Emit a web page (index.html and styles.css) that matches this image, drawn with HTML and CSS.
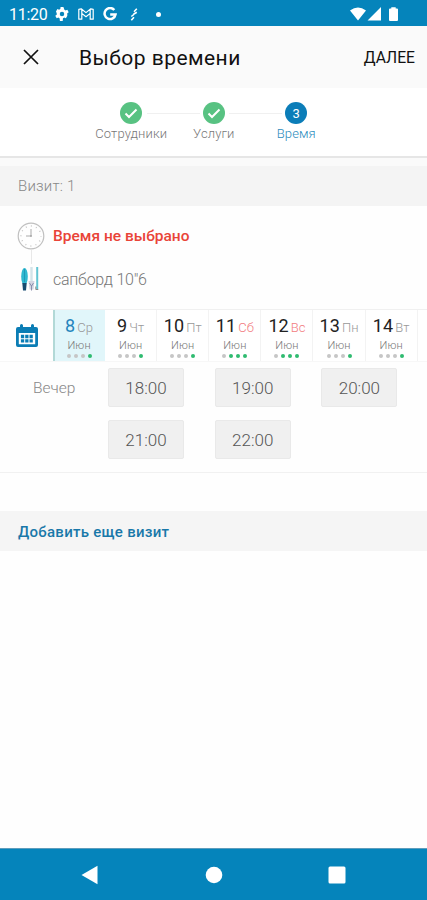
FILE: index.html
```html
<!DOCTYPE html>
<html lang="ru">
<head>
  <meta charset="UTF-8">
  <title>Выбор времени</title>
  <link rel="stylesheet" href="styles.css">
</head>
<body>
  <!-- Status bar -->
  <div class="status">
    <span class="clock">11:20</span>
    <svg class="gear" width="14" height="14" viewBox="2.900 2 20 20"><path fill="#fff" fill-rule="evenodd" d="M20.400 13a7.500 7.500 0 0 0 0-2l2.100-1.600-2-3.500-2.500 1a7.500 7.500 0 0 0-1.700-1L14.900 2h-4l-.4 2.900a7.500 7.500 0 0 0-1.700 1l-2.500-1-2 3.500L5.400 11a7.500 7.500 0 0 0 0 2l-2.100 1.600 2 3.500 2.500-1a7.500 7.500 0 0 0 1.700 1l.4 3.900h4l.4-3.900a7.500 7.500 0 0 0 1.700-1l2.500 1 2-3.500zM12.900 8.800a3.200 3.200 0 1 1 0 6.400 3.200 3.200 0 0 1 0-6.400z"/></svg>
    <svg class="mail" width="16" height="12" viewBox="0 0 16 12" fill="none" stroke="#fff" stroke-width="1.200" stroke-linejoin="round"><path d="M.8 11.200V1.400l2.400-.6L8 4.600 12.800.8l2.400.6v9.800h-3V5.400L8 8.700 3.800 5.400v5.800zM3.800 5.400V1.200M12.200 5.400V1.200"/></svg>
    <svg class="google" width="14" height="14" viewBox="0 0 14 14" fill="none" stroke="#fff" stroke-width="2.500"><path d="M11.300 3A5.500 5.500 0 1 0 12.500 7.500H7.200"/></svg>
    <svg class="bolt" width="8" height="13" viewBox="0 0 8 13" fill="none" stroke="#fff" stroke-width="1.600"><path d="M6.800.8 4 3.800M6.800 4.200 3.500 6.200M3.800 6.500 1.300 8.500M4 9.200 1.300 12.200"/></svg>
    <span class="dot"></span>
    <svg class="signal" width="50" height="16" viewBox="0 0 50 16" fill="#fff"><path d="M1 4.500Q9 -1.500 17 4.500L9 14.500zM32 1v13.500H18.500zM40 3.500q0-1 1-1h1.300V1.200h4.400v1.300H48q1 0 1 1v10.500q0 1-1 1h-7q-1 0-1-1z"/></svg>
  </div>

  <!-- Header -->
  <div class="header">
    <svg class="close" width="16" height="16" viewBox="0 0 16 16" stroke="#111" stroke-width="1.700"><path d="M1 1l14 14M15 1L1 15"/></svg>
    <h1>Выбор времени</h1>
    <span class="next">ДАЛЕЕ</span>
  </div>

  <!-- Steps -->
  <div class="steps">
    <div class="step">
      <span class="circle"><svg width="14" height="11" viewBox="0 0 14 11" fill="none" stroke="#fff" stroke-width="2"><path d="M1.500 5.500l3.500 3.500L12.500 1.500"/></svg></span>
      <span>Сотрудники</span>
    </div>
    <div class="step">
      <span class="circle"><svg width="14" height="11" viewBox="0 0 14 11" fill="none" stroke="#fff" stroke-width="2"><path d="M1.500 5.500l3.500 3.500L12.500 1.500"/></svg></span>
      <span>Услуги</span>
    </div>
    <div class="step current">
      <span class="circle">3</span>
      <span>Время</span>
    </div>
  </div>

  <div class="visit">Визит: 1</div>

  <!-- Visit info -->
  <div class="info">
    <div class="row">
      <svg width="28" height="28" viewBox="0 0 28 28" fill="none" stroke="#c0c0c0"><circle cx="14" cy="14" r="12.800" stroke-width="1.200"/><circle cx="14" cy="14" r="10" stroke-width="1.400" stroke-dasharray=".9 4.336" stroke-dashoffset=".45"/><path d="M14 7v7H9" stroke="#aaa"/><circle cx="14" cy="14" r="1" fill="#aaa" stroke="none"/></svg>
      <span class="warn">Время не выбрано</span>
    </div>
    <div class="link"></div>
    <div class="row">
      <svg width="28" height="26" viewBox="0 0 28 26"><ellipse cx="7.500" cy="10.500" rx="3.300" ry="8.500" fill="#2fb8d0"/><path d="M5.300 17h4.400L9 24.500H6z" fill="#164b70"/><path d="M7.500 3v13" stroke="#209ab8"/><path d="M14.500 1v16" stroke="#d3e3e8" stroke-width="2.400"/><path d="M11.500 15h6l-1 8.500h-4z" fill="#d4d6e2"/><path d="M12.500 17l2 3 2-3M14.500 19v5.500" fill="none" stroke="#8b8fad"/><path d="M20.200 1v22" stroke="#62c4d2" stroke-width="2"/><path d="M18.800 20.500v3h2.500" fill="none" stroke="#888"/></svg>
      <span>сапборд 10"6</span>
    </div>
  </div>

  <!-- Days -->
  <div class="days">
    <div class="calendar">
      <svg width="22" height="24" viewBox="0 0 22 24"><path fill="#0b7db5" fill-rule="evenodd" d="M2 3h2V1.500a1 1 0 0 1 3 0V3h8V1.500a1 1 0 0 1 3 0V3h2a2 2 0 0 1 2 2v16a2 2 0 0 1-2 2H2a2 2 0 0 1-2-2V5a2 2 0 0 1 2-2zm.8 6v11.200h16.400V9z"/><path stroke="#0b7db5" stroke-width="3.300" stroke-dasharray="3.300 1" d="M4.900 12.500h12M4.900 16.800h12"/></svg>
    </div>
    <div class="day active"><p><b>8</b> Ср</p><small>Июн</small><div class="dots"><i></i><i></i><i></i><i class="on"></i></div></div>
    <div class="day"><p><b>9</b> Чт</p><small>Июн</small><div class="dots"><i></i><i></i><i></i><i class="on"></i></div></div>
    <div class="day"><p><b>10</b> Пт</p><small>Июн</small><div class="dots"><i></i><i></i><i></i><i class="on"></i></div></div>
    <div class="day weekend"><p><b>11</b> Сб</p><small>Июн</small><div class="dots"><i></i><i class="on"></i><i class="on"></i><i class="on"></i></div></div>
    <div class="day weekend"><p><b>12</b> Вс</p><small>Июн</small><div class="dots"><i></i><i class="on"></i><i class="on"></i><i class="on"></i></div></div>
    <div class="day"><p><b>13</b> Пн</p><small>Июн</small><div class="dots"><i></i><i></i><i></i><i class="on"></i></div></div>
    <div class="day"><p><b>14</b> Вт</p><small>Июн</small><div class="dots"><i></i><i></i><i></i><i class="on"></i></div></div>
    <div class="rest"></div>
  </div>

  <!-- Time slots -->
  <div class="slots">
    <span class="part">Вечер</span>
    <div class="times">
      <button>18:00</button>
      <button>19:00</button>
      <button>20:00</button>
      <button>21:00</button>
      <button>22:00</button>
    </div>
  </div>

  <div class="add">Добавить еще визит</div>

  <!-- Android navigation -->
  <div class="nav">
    <svg width="18" height="20" viewBox="0 0 18 20"><path fill="#fff" d="M.5 10L16.500 .8v18.400z"/></svg>
    <svg width="18" height="18" viewBox="0 0 18 18"><circle cx="9" cy="9" r="8.300" fill="#fff"/></svg>
    <svg width="18" height="18" viewBox="0 0 18 18"><rect x=".5" y=".5" width="17" height="17" rx="1.500" fill="#fff"/></svg>
  </div>
</body>
</html>
```
FILE: styles.css
```css
* { margin: 0; padding: 0; box-sizing: border-box; }
body {
  font-family: Roboto, sans-serif;
  font-weight: 300;
  width: 427px;
  height: 900px;
  overflow: hidden;
  display: flex;
  flex-direction: column;
  background: #fefefe;
  color: #777;
}
svg { display: block; flex: none; }
.status {
  height: 26px;
  background: #0584bb;
  color: #fff;
  display: flex;
  align-items: center;
  padding: 2px 28px 0 9px;
}
.clock {
  width: 46px;
  font-size: 16px;
  font-weight: 400;
  letter-spacing: -0.3px;
}
.mail { margin-left: 9px; }
.google { margin-left: 9px; }
.bolt { margin-left: 13px; }
.dot {
  width: 5px;
  height: 5px;
  margin-left: 18px;
  border-radius: 50%;
  background: #fff;
}
.signal { margin-left: auto; }
.header {
  height: 62px;
  background: #fafafa;
  color: #111;
  display: flex;
  align-items: center;
  padding: 0 12px 0 23px;
}
.header h1 {
  margin-left: 40px;
  padding-top: 2px;
  font-size: 21px;
  font-weight: 400;
  letter-spacing: 0.45px;
}
.next {
  margin-left: auto;
  font-size: 15.700px;
  font-weight: 400;
}
.steps {
  height: 70px;
  padding: 14px 89px 0 90px;
  display: flex;
  background: #fff;
  border-bottom: 2px solid #e6e6e6;
  background-image: linear-gradient(#f0f0f0, #f0f0f0), linear-gradient(#f0f0f0, #f0f0f0);
  background-size: 53px 1px;
  background-position: 147px 25px, 229px 25px;
  background-repeat: no-repeat;
}
.step {
  width: 82.500px;
  flex: none;
  display: flex;
  flex-direction: column;
  align-items: center;
  gap: 2px;
  font-size: 13px;
  letter-spacing: 0.1px;
}
.circle {
  width: 22px;
  height: 22px;
  border-radius: 50%;
  background: #58c282;
  color: #fff;
  display: flex;
  align-items: center;
  justify-content: center;
  font-weight: 400;
}
.current { color: #2c8cbd; }
.current .circle { background: #0b7db8; }
.visit {
  height: 48px;
  border-top: 8px solid #fafafa;
  background: #f4f4f4;
  padding-left: 18px;
  line-height: 40px;
  font-size: 15px;
  color: #888;
  letter-spacing: 0.2px;
}
.info {
  height: 103px;
  padding: 15px 17px 0;
  font-size: 16px;
}
.row {
  height: 29px;
  display: flex;
  align-items: center;
  gap: 8px;
}
.row span { padding-top: 1px; letter-spacing: -0.25px; }
.link {
  width: 1px;
  height: 14px;
  margin-left: 14px;
  background: #e8e8e8;
}
.row .warn {
  color: #e94438;
  font-weight: 500;
  font-size: 15.500px;
  letter-spacing: 0;
}
.days {
  height: 53px;
  display: flex;
  background: #fff;
  border-top: 1px solid #f0f0f0;
  border-bottom: 1px solid #f7f7f7;
}
.calendar {
  width: 53px;
  flex: none;
  display: flex;
  align-items: center;
  justify-content: center;
}
.day {
  width: 52.100px;
  flex: none;
  border-right: 1px solid #f3f3f3;
  display: flex;
  flex-direction: column;
  align-items: center;
  padding-top: 5px;
}
.day p {
  font-size: 13px;
  line-height: 22px;
  color: #999;
  white-space: nowrap;
  word-spacing: -1px;
}
.day b {
  font-size: 18px;
  font-weight: 400;
  color: #222;
}
.day small {
  font-size: 11px;
  line-height: 13px;
  letter-spacing: 0.1px;
}
.dots {
  display: flex;
  gap: 3px;
  padding-top: 2px;
}
.dots i {
  width: 4px;
  height: 4px;
  border-radius: 50%;
  background: #c6c6c6;
}
.dots .on { background: #2fbb70; }
.active {
  background: #e1f6fa;
  border-left: 2px solid #b2d9d7;
  border-right: 0;
  padding-right: 2px;
}
.active b { color: #2585bd; }
.weekend p { color: #f27c80; }
.rest { flex: 1; }
.slots {
  height: 111px;
  padding: 6px 0 0 33px;
  display: flex;
  border-bottom: 1px solid #f1f1f1;
}
.part {
  width: 75px;
  font-size: 15.500px;
  line-height: 41px;
  color: #888;
}
.times {
  display: grid;
  grid-template-columns: repeat(3, 76px);
  grid-auto-rows: 39px;
  gap: 13px 30.700px;
}
.times button {
  font: 300 17px Roboto, sans-serif;
  color: #555;
  background: #f0f0f0;
  border: 1px solid #e9e9e9;
  border-radius: 2px;
}
.add {
  height: 40px;
  margin-top: 38px;
  padding-left: 18px;
  background: #f5f5f5;
  line-height: 42px;
  font-size: 15px;
  font-weight: 500;
  letter-spacing: 0.27px;
  color: #1978a9;
}
.nav {
  height: 52px;
  margin-top: auto;
  padding: 0 81px;
  background: #0584bb;
  border-top: 1px solid #5e9dbc;
  display: flex;
  align-items: center;
  justify-content: space-between;
}
```
